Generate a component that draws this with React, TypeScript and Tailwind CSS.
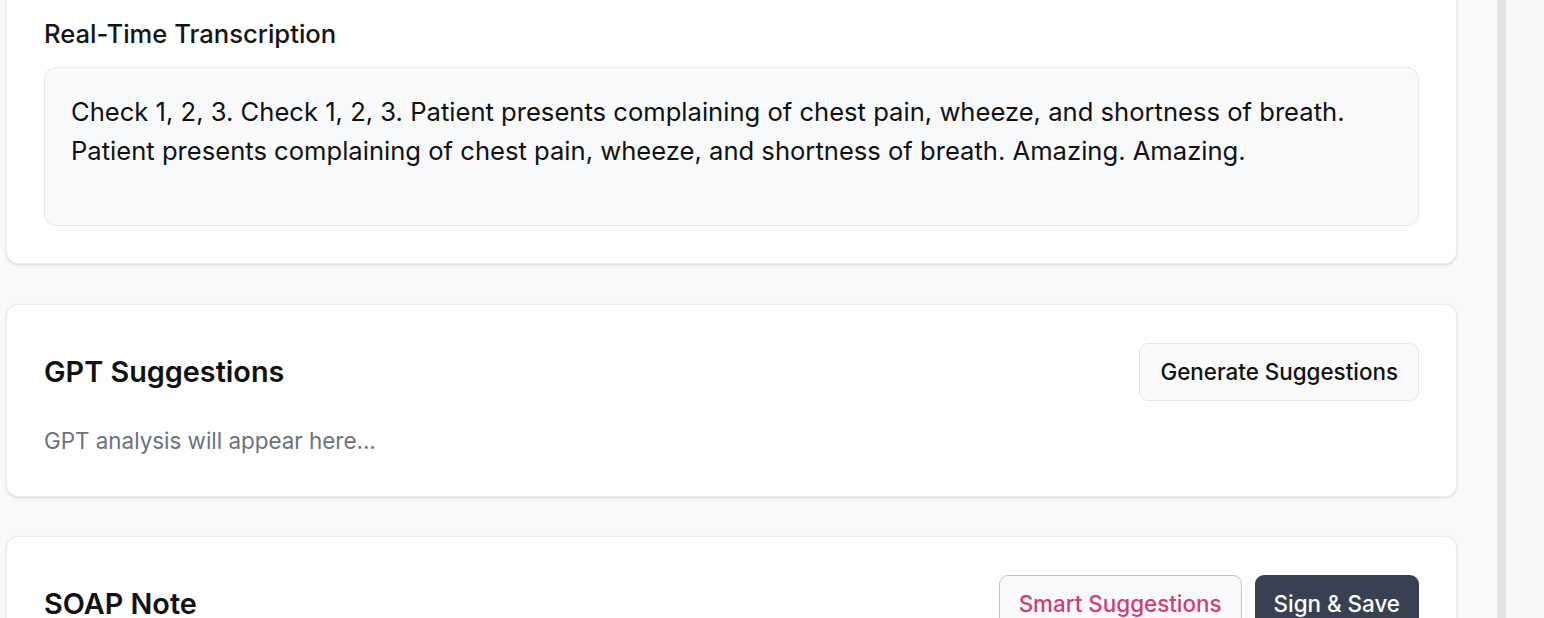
export default function App() {
  return (
    <div className="flex h-[618px] overflow-hidden bg-[#f9f9f9] font-['Inter',sans-serif] text-[#111111]">
      <main className="-mt-[21px] flex w-[1497px] shrink-0 flex-col gap-10 pl-[6px] pr-[40px]">
        <section className="rounded-xl border border-[#ececec] bg-white p-[37px] shadow-sm">
          <h3 className="text-[25.6px] font-medium leading-[34px] text-[#151515]">
            Real-Time Transcription
          </h3>
          <div className="mt-4 min-h-[159px] rounded-xl border border-[#e8e9ec] bg-[#f8f9fb] py-6 pl-[26px] pr-6 text-[25.6px] leading-[39px]">
            Check 1, 2, 3. Check 1, 2, 3. Patient presents complaining of chest
            pain, wheeze, and shortness of breath. Patient presents complaining
            of chest pain, wheeze, and shortness of breath. Amazing. Amazing.
          </div>
        </section>

        <section className="rounded-xl border border-[#ececec] bg-white p-[37px] shadow-sm">
          <div className="flex h-[60px] items-center justify-between">
            <h2 className="text-[28.8px] font-semibold leading-[40px]">
              GPT Suggestions
            </h2>
            <button className="h-[58px] rounded-[9px] border border-[#e6e6e6] bg-[#fafafa] px-[20px] text-[22.4px] font-medium">
              Generate Suggestions
            </button>
          </div>
          <p className="mt-[21px] text-[22.4px] leading-[36px] text-[#6b7280]">
            GPT analysis will appear here...
          </p>
        </section>

        <section className="-mt-px rounded-xl border border-[#ececec] bg-white p-[37px] shadow-sm">
          <div className="flex h-[60px] items-center justify-between">
            <h2 className="text-[28.8px] font-semibold leading-[40px]">
              SOAP Note
            </h2>
            <div className="flex gap-[13px]">
              <button className="h-[58px] rounded-[9px] border border-[#f3a9cb] bg-[#fafafa] px-[19px] text-[22.4px] font-medium text-[#d23c77]">
                Smart Suggestions
              </button>
              <button className="h-[58px] rounded-[9px] bg-[#374151] px-[19px] text-[22.4px] font-medium text-white">
                Sign &amp; Save
              </button>
            </div>
          </div>
          <div className="h-[200px]" />
        </section>
      </main>
      <div className="w-[9px] shrink-0 bg-[#e4e4e8]" />
      <aside className="flex-1 bg-[#f8f8f8]" />
    </div>
  )
}
